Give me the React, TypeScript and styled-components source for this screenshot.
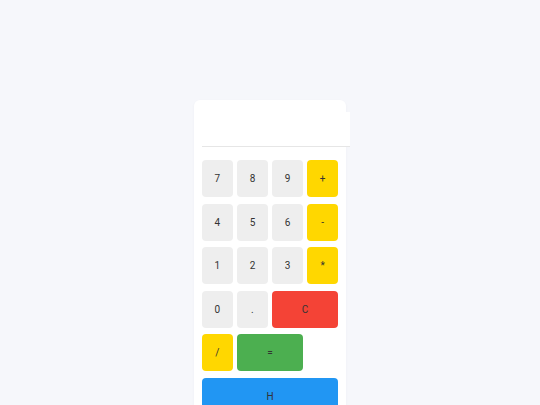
import React, { useState } from "react";
import styled, { createGlobalStyle } from "styled-components";

const GlobalStyle = createGlobalStyle`
  html, body {
    margin: 0;
    padding: 0;
    background: #f6f7fb;
    font-family: Roboto, "Liberation Sans", Arial, sans-serif;
  }
`;

const Page = styled.div`
  display: flex;
  justify-content: center;
  padding-top: 100px;
`;

const Card = styled.div`
  width: 136px;
  padding: 12px 8px 16px;
  background: #ffffff;
  border-radius: 6px;
  box-shadow: 0 1px 3px rgba(30, 40, 80, 0.04);
`;

const Display = styled.input`
  display: block;
  width: 100%;
  height: 34px;
  padding: 0 6px;
  box-sizing: content-box;
  border: none;
  border-bottom: 1px solid #e6e6e6;
  background: #ffffff;
  font-family: inherit;
  font-size: 18px;
  text-align: right;
  color: #333;
  outline: none;
  margin: 0 0 0 0;
`;

const Keys = styled.div`
  display: grid;
  grid-template-columns: repeat(4, 1fr);
  grid-auto-rows: 37px;
  gap: 6.5px 4.5px;
  margin-top: 13px;
`;

type Variant = "num" | "op" | "clear" | "equals" | "history";

const colors: Record<Variant, string> = {
  num: "#eeeeee",
  op: "#ffd700",
  clear: "#f44336",
  equals: "#4caf50",
  history: "#2196f3",
};

const Key = styled.button<{ $variant: Variant; $span?: number }>`
  grid-column: span ${(p) => p.$span ?? 1};
  border: none;
  border-radius: 4px;
  background: ${(p) => colors[p.$variant]};
  color: #333;
  font-family: inherit;
  font-size: 10px;
  padding: 0;
  cursor: pointer;
`;

const keys: { label: string; variant: Variant; span?: number }[] = [
  { label: "7", variant: "num" },
  { label: "8", variant: "num" },
  { label: "9", variant: "num" },
  { label: "+", variant: "op" },
  { label: "4", variant: "num" },
  { label: "5", variant: "num" },
  { label: "6", variant: "num" },
  { label: "-", variant: "op" },
  { label: "1", variant: "num" },
  { label: "2", variant: "num" },
  { label: "3", variant: "num" },
  { label: "*", variant: "op" },
  { label: "0", variant: "num" },
  { label: ".", variant: "num" },
  { label: "C", variant: "clear", span: 2 },
  { label: "/", variant: "op" },
  { label: "=", variant: "equals", span: 2 },
  { label: "H", variant: "history", span: 4 },
];

export default function App() {
  const [value, setValue] = useState("");

  const press = (label: string) => {
    if (label === "C") return setValue("");
    if (label === "=") {
      try {
        // eslint-disable-next-line no-new-func
        setValue(String(Function(`return (${value})`)()));
      } catch {
        setValue("Error");
      }
      return;
    }
    if (label === "H") return;
    setValue(value + label);
  };

  return (
    <Page>
      <GlobalStyle />
      <Card>
        <Display value={value} readOnly />
        <Keys>
          {keys.map((k) => (
            <Key
              key={k.label}
              $variant={k.variant}
              $span={k.span}
              onClick={() => press(k.label)}
            >
              {k.label}
            </Key>
          ))}
        </Keys>
      </Card>
    </Page>
  );
}
